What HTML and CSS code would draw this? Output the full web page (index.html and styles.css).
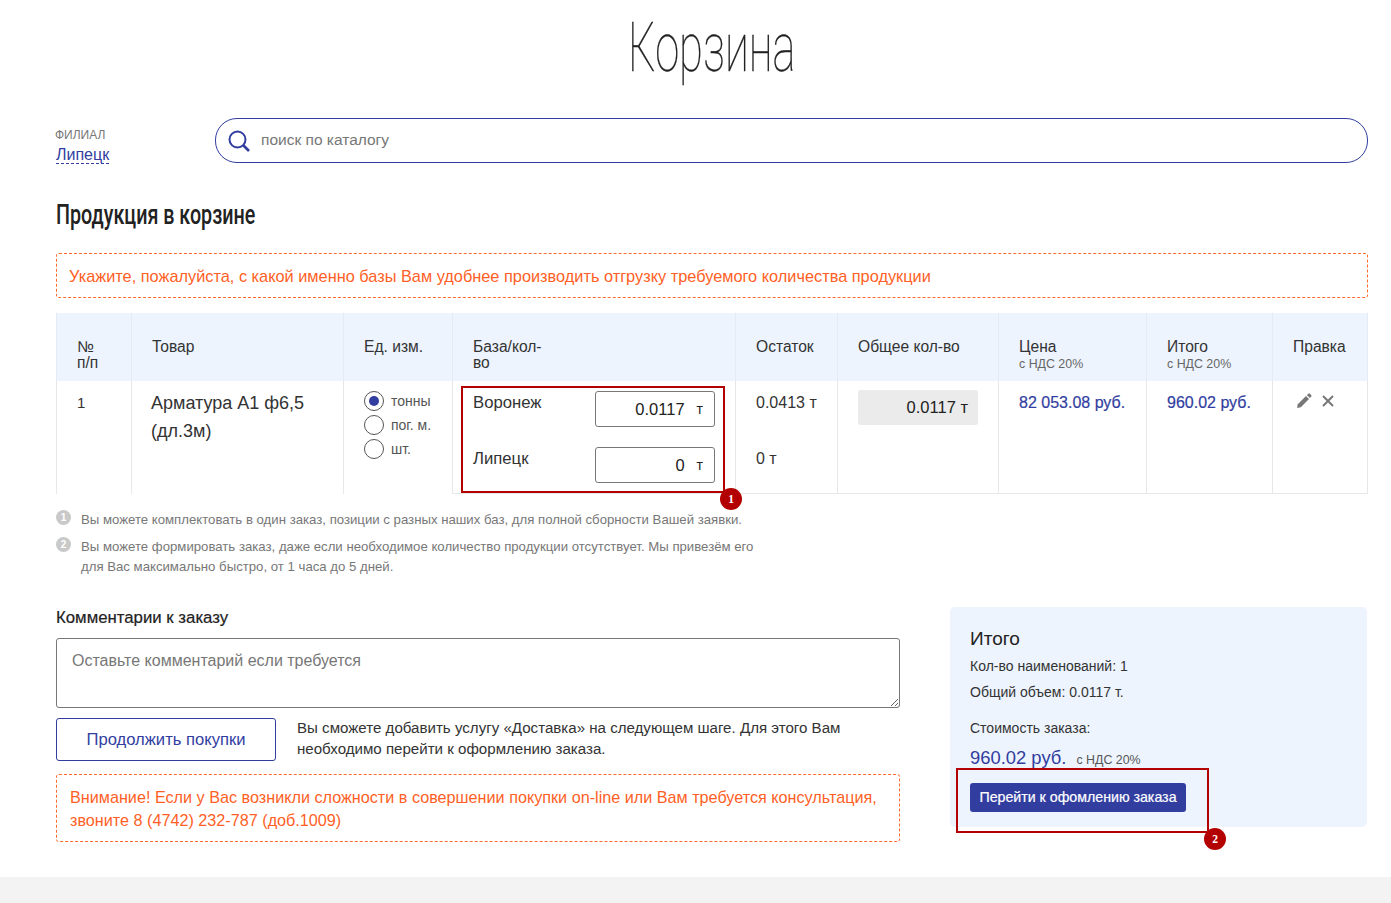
FILE: index.html
```html
<!DOCTYPE html>
<html lang="ru">
<head>
    <meta charset="UTF-8">
    <title>Корзина</title>
    <link rel="stylesheet" href="styles.css">
</head>
<body>
    <div class="page">
        <h1 class="page-title"><span>Корзина</span></h1>
        <div class="top-row">
            <div class="branch">
                <div class="branch-label">ФИЛИАЛ</div>
                <a class="branch-link">Липецк</a>
            </div>
            <div class="search">
                <svg class="search-icon" width="24" height="24" viewBox="0 0 24 24" fill="none" stroke="#323e9f" stroke-width="2"><circle cx="10.5" cy="10.5" r="8"/><path d="M16 16l6 6" stroke-width="2.6"/></svg>
                <span class="search-text">поиск по каталогу</span>
            </div>
        </div>
        <h2 class="section-title"><span>Продукция в корзине</span></h2>
        <div class="notice notice-top">Укажите, пожалуйста, с какой именно базы Вам удобнее производить отгрузку требуемого количества продукции</div>

        <table class="cart">
            <colgroup>
                <col class="c1"><col class="c2"><col class="c3"><col class="c4"><col class="c5"><col class="c6"><col class="c7"><col class="c8"><col class="c9">
            </colgroup>
            <thead>
                <tr>
                    <th>№<br>п/п</th>
                    <th>Товар</th>
                    <th>Ед. изм.</th>
                    <th>База/кол-<br>во</th>
                    <th>Остаток</th>
                    <th>Общее кол-во</th>
                    <th>Цена<small>с НДС 20%</small></th>
                    <th>Итого<small>с НДС 20%</small></th>
                    <th>Правка</th>
                </tr>
            </thead>
            <tbody>
                <tr>
                    <td class="num">1</td>
                    <td class="product">Арматура А1 ф6,5 (дл.3м)</td>
                    <td class="units">
                        <div class="radio-row"><span class="radio checked"></span>тонны</div>
                        <div class="radio-row"><span class="radio"></span>пог. м.</div>
                        <div class="radio-row"><span class="radio"></span>шт.</div>
                    </td>
                    <td class="bases">
                        <div class="base-row">
                            <span class="base-name">Воронеж</span>
                            <div class="qty"><span>0.0117</span><span class="unit">т</span></div>
                        </div>
                        <div class="base-row">
                            <span class="base-name">Липецк</span>
                            <div class="qty"><span>0</span><span class="unit">т</span></div>
                        </div>
                        <div class="mark mark-bases"><span class="mark-badge">1</span></div>
                    </td>
                    <td class="rest">
                        <div>0.0413 т</div>
                        <div class="rest-second">0 т</div>
                    </td>
                    <td><div class="total-qty">0.0117 т</div></td>
                    <td class="price">82 053.08 руб.</td>
                    <td class="price">960.02 руб.</td>
                    <td>
                        <div class="actions">
                            <svg width="16" height="16" viewBox="0 0 16 16" fill="#777"><path d="M1 15l.8-3.800L10 3l3 3-8.200 8.200z"/><path d="M10.900 2.100L12.400.7a1 1 0 0 1 1.400 0l1.500 1.500a1 1 0 0 1 0 1.400L13.900 5z"/></svg>
                            <svg width="14" height="14" viewBox="0 0 14 14" stroke="#777" stroke-width="2" fill="none"><path d="M2 2l10 10M12 2L2 12"/></svg>
                        </div>
                    </td>
                </tr>
            </tbody>
        </table>

        <div class="hints">
            <div class="hint"><span class="hint-num">1</span><p>Вы можете комплектовать в один заказ, позиции с разных наших баз, для полной сборности Вашей заявки.</p></div>
            <div class="hint"><span class="hint-num">2</span><p>Вы можете формировать заказ, даже если необходимое количество продукции отсутствует. Мы привезём его<br>для Вас максимально быстро, от 1 часа до 5 дней.</p></div>
        </div>

        <div class="bottom">
            <div class="comments">
                <label class="comments-label" for="comment">Комментарии к заказу</label>
                <textarea id="comment" class="comment-box" placeholder="Оставьте комментарий если требуется"></textarea>
                <div class="continue-row">
                    <a class="btn-outline">Продолжить покупки</a>
                    <p>Вы сможете добавить услугу «Доставка» на следующем шаге. Для этого Вам необходимо перейти к оформлению заказа.</p>
                </div>
                <div class="notice notice-bottom">Внимание! Если у Вас возникли сложности в совершении покупки on-line или Вам требуется консультация, звоните 8 (4742) 232-787 (доб.1009)</div>
            </div>
            <div class="summary">
                <h3>Итого</h3>
                <p class="line">Кол-во наименований: 1</p>
                <p class="line">Общий объем: 0.0117 т.</p>
                <p class="line cost-label">Стоимость заказа:</p>
                <div class="cost"><span>960.02 руб.</span><small>с НДС 20%</small></div>
                <a class="btn-primary">Перейти к офомлению заказа</a>
                <div class="mark mark-order"><span class="mark-badge">2</span></div>
            </div>
        </div>
    </div>
    <div class="footer"></div>
</body>
</html>
```
FILE: styles.css
```css
body {
    margin: 0;
    background: #fff;
    font-family: "Liberation Sans", Arial, sans-serif;
    color: #333;
}
.page {
    padding: 0 23px 0 56px;
    height: 877px;
    box-sizing: border-box;
}
.page-title {
    margin: 0;
    height: 118px;
    padding-top: 8px;
    box-sizing: border-box;
    text-align: center;
    font-family: Roboto, sans-serif;
    font-weight: 100;
    font-size: 68px;
    line-height: 80px;
    color: #222;
    -webkit-text-stroke: 0.3px #222;
}
.page-title span {
    display: inline-block;
    transform: scaleX(0.64);
}
.top-row {
    display: flex;
    align-items: center;
    height: 45px;
}
.branch {
    width: 159px;
    flex-shrink: 0;
    padding-top: 11px;
}
.branch-label {
    margin-left: -1px;
    font-size: 12px;
    line-height: 15px;
    color: #777;
}
.branch-link {
    display: inline-block;
    margin-top: 3px;
    font-size: 16px;
    line-height: 17px;
    color: #323e9f;
    border-bottom: 1px dashed #323e9f;
}
.search {
    flex: 1;
    height: 45px;
    box-sizing: border-box;
    border: 1px solid #323e9f;
    border-radius: 22px;
    display: flex;
    align-items: center;
    padding-left: 11px;
}
.search-text {
    margin: -2px 0 0 10px;
    font-size: 15.5px;
    color: #777;
}
.section-title {
    margin: 36px 0 0;
    height: 54px;
    font-family: Roboto, sans-serif;
    font-weight: 500;
    font-size: 27px;
    line-height: 32px;
    color: #222;
}
.section-title span {
    display: inline-block;
    transform: scaleX(0.73);
    transform-origin: left center;
    white-space: nowrap;
}
.notice {
    border: 1px dashed #ff6b2c;
    border-radius: 3px;
    color: #ff5f26;
    font-size: 16.34px;
    box-sizing: border-box;
}
.notice-top {
    height: 45px;
    line-height: 44px;
    padding-left: 12px;
}
.cart {
    width: 1311px;
    margin-top: 15px;
    border-collapse: collapse;
    table-layout: fixed;
}
.c1 { width: 75px; }
.c2 { width: 212px; }
.c3 { width: 109px; }
.c4 { width: 283px; }
.c5 { width: 102px; }
.c6 { width: 161px; }
.c7 { width: 148px; }
.c8 { width: 126px; }
.c9 { width: 95px; }
.cart th {
    height: 68px;
    box-sizing: border-box;
    padding: 26px 20px 0;
    background: #edf4fe;
    border-left: 1px solid #e6ebf1;
    border-right: 1px solid #e6ebf1;
    text-align: left;
    vertical-align: top;
    font-weight: 400;
    font-size: 15.6px;
    line-height: 16px;
    color: #333;
}
.cart th small {
    display: block;
    font-size: 12.4px;
    line-height: 18px;
    color: #666;
}
.cart td {
    height: 112px;
    box-sizing: border-box;
    padding: 10px 20px 0;
    border: 1px solid #e8e8e8;
    border-top: none;
    vertical-align: top;
    font-size: 16px;
    line-height: 24px;
}
.cart td:nth-child(-n+3) {
    border-bottom: none;
}
.cart td.num {
    font-size: 15px;
}
.cart td.product {
    font-size: 18px;
    line-height: 28px;
    padding: 8px 19px 0;
}
.cart td.units {
    padding-top: 8px;
}
.radio-row {
    display: flex;
    align-items: center;
    height: 24px;
    font-size: 14px;
    color: #555;
}
.radio {
    width: 18px;
    height: 18px;
    border: 1px solid #555;
    border-radius: 50%;
    margin-right: 7px;
    flex-shrink: 0;
    position: relative;
}
.radio.checked::after {
    content: "";
    position: absolute;
    left: 4px;
    top: 4px;
    width: 10px;
    height: 10px;
    border-radius: 50%;
    background: #323e9f;
}
.cart td.bases {
    position: relative;
    padding-top: 0;
}
.base-row {
    display: flex;
    justify-content: space-between;
    height: 56px;
    padding-top: 10px;
    box-sizing: border-box;
}
.base-row .base-name {
    font-size: 16.7px;
}
.qty {
    width: 120px;
    height: 36px;
    box-sizing: border-box;
    border: 1px solid #777;
    border-radius: 3px;
    display: flex;
    justify-content: flex-end;
    align-items: center;
    padding-right: 11px;
    font-size: 16.5px;
    color: #222;
}
.unit {
    margin-left: 12px;
    font-size: 14px;
}
.rest-second {
    margin-top: 32px;
}
.total-qty {
    width: 120px;
    height: 35px;
    margin-top: -1px;
    line-height: 35px;
    box-sizing: border-box;
    background: #ebebeb;
    border-radius: 3px;
    text-align: right;
    padding-right: 10px;
    font-size: 16.5px;
    color: #222;
}
.cart td.price {
    color: #323e9f;
    -webkit-text-stroke: 0.2px #323e9f;
}
.actions {
    display: flex;
    align-items: center;
    gap: 9px;
    padding: 2px 0 0 3px;
}
.mark {
    position: absolute;
    box-sizing: border-box;
    border: 2px solid #b30000;
}
.mark-badge {
    position: absolute;
    right: -19px;
    bottom: -19px;
    width: 22px;
    height: 22px;
    border-radius: 50%;
    background: #b30000;
    color: #fff;
    font-family: "Liberation Serif", serif;
    font-weight: 700;
    font-size: 11.5px;
    line-height: 22px;
    text-align: center;
}
.mark-bases {
    left: 8px;
    top: 5px;
    width: 264px;
    height: 107px;
}
.hints {
    margin-top: 16px;
}
.hint {
    display: flex;
    margin-bottom: 7px;
}
.hint-num {
    width: 15px;
    height: 15px;
    border-radius: 50%;
    background: #c9c9c9;
    color: #fff;
    font-size: 10px;
    font-weight: 700;
    line-height: 15px;
    text-align: center;
    margin-right: 10px;
    flex-shrink: 0;
}
.hint p {
    margin: 0;
    font-size: 13.2px;
    line-height: 20px;
    color: #777;
}
.bottom {
    display: flex;
    justify-content: space-between;
    margin-top: 23px;
}
.comments {
    width: 844px;
}
.comments-label {
    display: block;
    font-size: 16.8px;
    line-height: 18px;
    margin-top: 9px;
    color: #222;
    -webkit-text-stroke: 0.2px #222;
}
.comment-box {
    display: block;
    width: 100%;
    height: 70px;
    margin-top: 11px;
    box-sizing: border-box;
    border: 1px solid #777;
    border-radius: 3px;
    padding: 12px 15px;
    font-family: "Liberation Sans", Arial, sans-serif;
    font-size: 16px;
    line-height: 20px;
}
.comment-box::placeholder {
    color: #777;
}
.continue-row {
    display: flex;
    margin-top: 10px;
}
.btn-outline {
    width: 220px;
    height: 43px;
    line-height: 42px;
    box-sizing: border-box;
    flex-shrink: 0;
    border: 1px solid #323e9f;
    border-radius: 3px;
    text-align: center;
    font-size: 16.6px;
    color: #323e9f;
}
.continue-row p {
    margin: -1px 0 0 21px;
    font-size: 15.1px;
    line-height: 21px;
    color: #333;
}
.notice-bottom {
    margin-top: 13px;
    height: 68px;
    padding: 11px 13px;
    line-height: 23px;
    font-size: 16.2px;
}
.summary {
    position: relative;
    width: 417px;
    height: 220px;
    margin: 7px 1px 0 0;
    box-sizing: border-box;
    background: #edf4fe;
    border-radius: 5px;
    padding: 20px;
}
.summary h3 {
    margin: 0;
    font-weight: 400;
    font-size: 19px;
    line-height: 24px;
    color: #222;
}
.line {
    margin: 5px 0 0;
    font-size: 14px;
    line-height: 20px;
    color: #333;
}
.line + .line {
    margin-top: 6px;
}
.summary .cost-label {
    margin-top: 16px;
}
.cost {
    margin-top: 8px;
    line-height: 24px;
    font-size: 18.4px;
    color: #323e9f;
}
.cost small {
    margin-left: 10px;
    font-size: 12.4px;
    color: #555;
}
.btn-primary {
    display: block;
    width: 216px;
    height: 29px;
    margin-top: 11px;
    line-height: 29px;
    border-radius: 3px;
    background: #323e9f;
    color: #fff;
    font-size: 14.2px;
    -webkit-text-stroke: 0.2px #fff;
    text-align: center;
}
.mark-order {
    left: 6px;
    top: 161px;
    width: 253px;
    height: 65px;
}
.footer {
    height: 26px;
    background: #f3f3f3;
}
```
